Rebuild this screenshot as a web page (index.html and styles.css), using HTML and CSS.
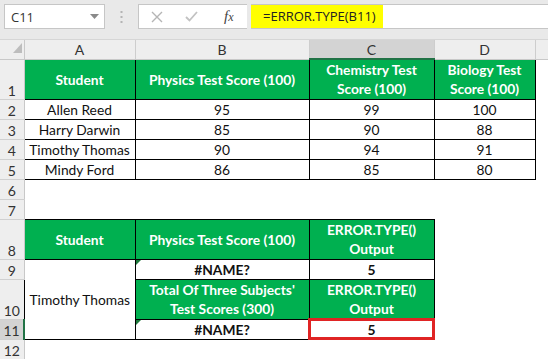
FILE: index.html
```html
<!DOCTYPE html>
<html>
<head>
<meta charset="utf-8">
<link rel="stylesheet" href="styles.css">
</head>
<body>
<div class="fbar">
  <div class="namebox">
    <span class="nb-text">C11</span>
    <svg class="nb-arrow" width="9" height="5" viewBox="0 0 9 5"><path d="M0 0H9L4.5 5Z" fill="#8a8a8a"/></svg>
  </div>
  <svg class="dots" width="3" height="13" viewBox="0 0 3 13"><rect x="0.5" y="0" width="2" height="2" fill="#b4b4b4"/><rect x="0.5" y="5" width="2" height="2" fill="#b4b4b4"/><rect x="0.5" y="10" width="2" height="2" fill="#b4b4b4"/></svg>
  <div class="fbtns">
    <svg class="ico-x" width="12" height="12" viewBox="0 0 12 12"><path d="M1 1L11 11M11 1L1 11" stroke="#b5b5b5" stroke-width="1.4" fill="none"/></svg>
    <svg class="ico-ok" width="13" height="11" viewBox="0 0 13 11"><path d="M1 6L4.5 9.5L12 1" stroke="#c2c2c2" stroke-width="1.8" fill="none"/></svg>
    <span class="fx">f<span class="fx-x">x</span></span>
  </div>
  <div class="finput"><span class="fhl">=ERROR.TYPE(B11)</span></div>
</div>
<table class="sheet">
  <colgroup>
    <col class="c-rh"><col class="c-a"><col class="c-b"><col class="c-c"><col class="c-d"><col class="c-e">
  </colgroup>
  <tr class="h19">
    <th class="corner"><svg class="corner-tri" width="9" height="10" viewBox="0 0 9 10"><path d="M9 0V10H0Z" fill="#bdbdbd"/></svg></th>
    <th class="ch">A</th><th class="ch">B</th><th class="ch sel">C</th><th class="ch">D</th><th class="ch last"></th>
  </tr>
  <tr class="h40">
    <th class="rh">1</th>
    <td class="g bx">Student</td><td class="g bx">Physics Test Score (100)</td><td class="g bx">Chemistry Test<br>Score (100)</td><td class="g bx">Biology Test<br>Score (100)</td><td></td>
  </tr>
  <tr class="h20"><th class="rh">2</th><td class="bx">Allen Reed</td><td class="bx">95</td><td class="bx">99</td><td class="bx">100</td><td></td></tr>
  <tr class="h20"><th class="rh">3</th><td class="bx">Harry Darwin</td><td class="bx">85</td><td class="bx">90</td><td class="bx">88</td><td></td></tr>
  <tr class="h20"><th class="rh">4</th><td class="bx">Timothy Thomas</td><td class="bx">90</td><td class="bx">94</td><td class="bx">91</td><td></td></tr>
  <tr class="h20"><th class="rh">5</th><td class="bx">Mindy Ford</td><td class="bx">86</td><td class="bx">85</td><td class="bx">80</td><td></td></tr>
  <tr class="h20"><th class="rh">6</th><td></td><td></td><td></td><td></td><td></td></tr>
  <tr class="h20"><th class="rh">7</th><td></td><td></td><td></td><td></td><td></td></tr>
  <tr class="h40">
    <th class="rh">8</th>
    <td class="g bx">Student</td><td class="g bx">Physics Test Score (100)</td><td class="g bx">ERROR.TYPE()<br>Output</td><td></td><td></td>
  </tr>
  <tr class="h20">
    <th class="rh">9</th>
    <td class="bx" rowspan="3">Timothy Thomas</td><td class="bx b err">#NAME?</td><td class="bx b">5</td><td></td><td></td>
  </tr>
  <tr class="h40">
    <th class="rh">10</th>
    <td class="g bx">Total Of Three Subjects'<br>Test Scores (300)</td><td class="g bx">ERROR.TYPE()<br>Output</td><td></td><td></td>
  </tr>
  <tr class="h20">
    <th class="rh rsel">11</th>
    <td class="bx b err">#NAME?</td><td class="bx b active">5</td><td></td><td></td>
  </tr>
  <tr class="h20"><th class="rh">12</th><td></td><td></td><td></td><td></td><td></td></tr>
</table>
</body>
</html>
```
FILE: styles.css
```css
html, body {
  margin: 0;
  padding: 0;
  background: #ffffff;
  overflow: hidden;
}
body {
  width: 548px;
  height: 359px;
  font-family: Lato, "Open Sans", sans-serif;
}

/* formula bar */
.fbar {
  height: 40px;
  box-sizing: border-box;
  background: #e9e9e9;
  display: flex;
  align-items: flex-start;
  padding: 4px 0 0 4px;
  border-bottom: 1px solid #d6d6d6;
}
.namebox {
  width: 101px;
  height: 25px;
  box-sizing: border-box;
  background: #fff;
  border: 1px solid #c6c6c6;
  display: flex;
  align-items: center;
  justify-content: space-between;
  padding: 0 5px 0 6px;
}
.nb-text {
  font-family: "Open Sans", "Noto Sans", sans-serif;
  font-size: 13px;
  color: #333;
}
.dots {
  margin: 7px 0 0 15px;
}
.fbtns {
  margin-left: 15px;
  width: 109px;
  height: 25px;
  box-sizing: border-box;
  background: #fff;
  border: 1px solid #c6c6c6;
  border-right: none;
  display: flex;
  align-items: center;
  padding-left: 12px;
}
.ico-x { margin-right: 22px; }
.ico-ok { margin-right: 26px; }
.fx {
  font-family: "Liberation Serif", serif;
  font-style: italic;
  font-size: 15px;
  color: #444;
}
.fx-x { font-size: 12px; }
.finput {
  margin-left: 4px;
  flex: 1;
  height: 25px;
  box-sizing: border-box;
  background: #fff;
  border-top: 1px solid #c6c6c6;
  border-bottom: 1px solid #c6c6c6;
}
.fhl {
  display: inline-block;
  width: 132px;
  height: 23px;
  box-sizing: border-box;
  background: #ffff00;
  padding-left: 12px;
  font-family: "Open Sans", "Noto Sans", sans-serif;
  font-size: 13px;
  line-height: 23px;
  color: #222;
}

/* sheet */
.sheet {
  border-collapse: collapse;
  table-layout: fixed;
  width: 548px;
  font-size: 13.8px;
  color: #111;
}
.c-rh { width: 24px; }
.c-a { width: 111px; }
.c-b { width: 174px; }
.c-c { width: 125px; }
.c-d { width: 101px; }
.c-e { width: 13px; }

.sheet td, .sheet th {
  padding: 0;
  text-align: center;
  vertical-align: middle;
  white-space: nowrap;
  font-weight: normal;
  line-height: 17px;
  overflow: hidden;
}
.h19 { height: 19px; }
.h20 { height: 20px; }
.h40 { height: 40px; }
.h40 td { line-height: 19px; }

.corner {
  background: #eeeeee;
  border-right: 1px solid #c8c8c8;
  border-bottom: 1px solid #c8c8c8;
  text-align: right;
  vertical-align: bottom;
}
.corner-tri {
  display: block;
  margin: 0 2px 2px auto;
}
.ch {
  background: #eeeeee;
  color: #333;
  font-size: 14px;
  border-right: 1px solid #cdcdcd;
  border-bottom: 1px solid #c8c8c8;
}
.ch.last { border-right: none; }
.ch.sel {
  background: #d3d3d3;
  border-bottom: 2px solid #217346;
}
.rh {
  background: #eeeeee;
  color: #333;
  font-size: 14px;
  border-bottom: 1px solid #d0d0d0;
  border-right: 1px solid #c8c8c8;
  vertical-align: bottom !important;
}
.rh.rsel {
  background: #d3d3d3;
  border-right: 2px solid #217346;
}
.bx { border: 1px solid #000; }
.g {
  background: #00b050;
  color: #ffffff;
  font-weight: bold !important;
}
.b { font-weight: bold !important; }
.err { position: relative; }
.err::before {
  content: "";
  position: absolute;
  left: 0;
  top: 0;
  border-top: 5px solid #1e7a3c;
  border-right: 5px solid transparent;
}
.active {
  outline: 3px solid #e02424;
  outline-offset: -2px;
}
```
